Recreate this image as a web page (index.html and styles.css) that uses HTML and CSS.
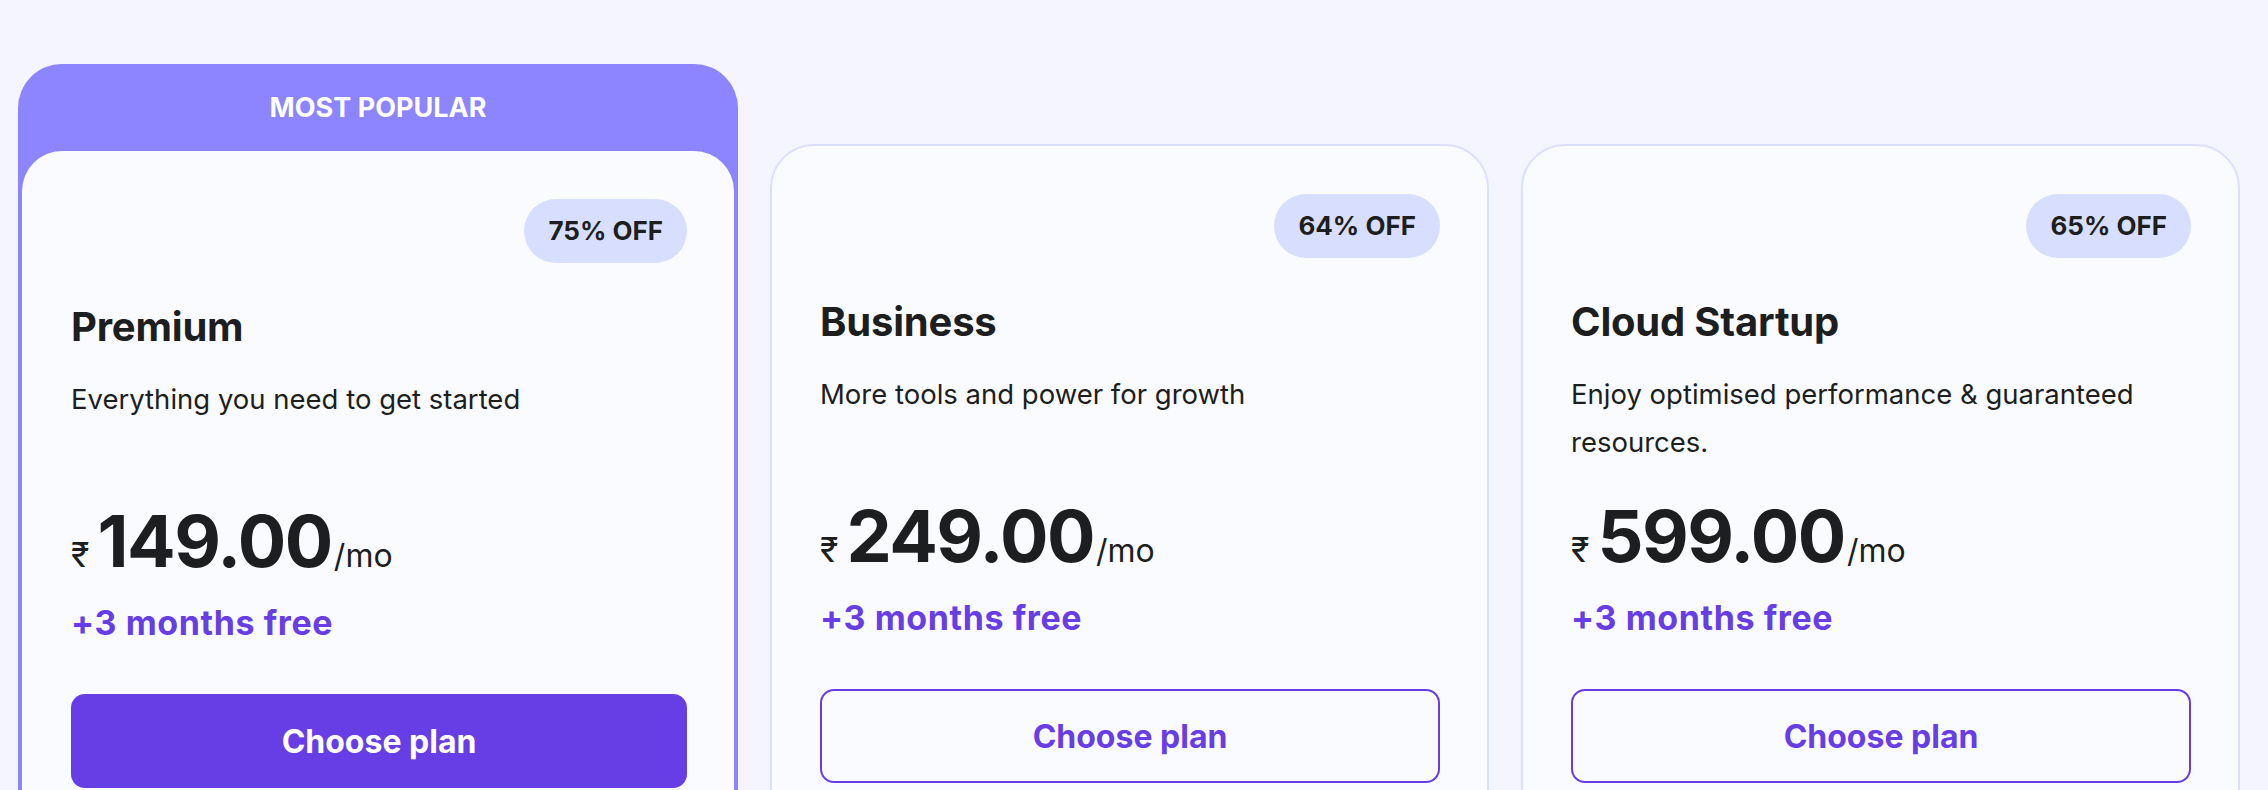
FILE: index.html
```html
<!DOCTYPE html>
<html lang="en">
<head>
<meta charset="utf-8">
<title>Plans</title>
<link rel="stylesheet" href="styles.css">
</head>
<body>
<main class="plans">
  <section class="popular">
    <div class="popular-label">MOST POPULAR</div>
    <div class="card card-inner">
      <div class="badge-row"><span class="badge">75% OFF</span></div>
      <h2 class="title">Premium</h2>
      <p class="desc">Everything you need to get started</p>
      <div class="price"><span class="cur">₹</span><span class="amount">149.00</span><span class="per">/mo</span></div>
      <div class="bonus">+3 months free</div>
      <button class="btn btn-solid">Choose plan</button>
    </div>
  </section>
  <section class="card card-plain">
    <div class="badge-row"><span class="badge">64% OFF</span></div>
    <h2 class="title">Business</h2>
    <p class="desc">More tools and power for growth</p>
    <div class="price"><span class="cur">₹</span><span class="amount">249.00</span><span class="per">/mo</span></div>
    <div class="bonus">+3 months free</div>
    <button class="btn btn-outline">Choose plan</button>
  </section>
  <section class="card card-plain">
    <div class="badge-row"><span class="badge">65% OFF</span></div>
    <h2 class="title">Cloud Startup</h2>
    <p class="desc">Enjoy optimised performance &amp; guaranteed resources.</p>
    <div class="price"><span class="cur">₹</span><span class="amount">599.00</span><span class="per">/mo</span></div>
    <div class="bonus">+3 months free</div>
    <button class="btn btn-outline">Choose plan</button>
  </section>
</main>
</body>
</html>
```
FILE: styles.css
```css
html, body {
  margin: 0;
  height: 790px;
  overflow: hidden;
}
body {
  background: #f4f5ff;
  font-family: Inter, "DejaVu Sans", sans-serif;
  color: #1d1e20;
}
.plans {
  display: flex;
  align-items: flex-start;
  gap: 32px;
  padding: 64px 0 0 18px;
}
.popular {
  width: 720px;
  flex: none;
  background: #8c85ff;
  border-radius: 44px;
  padding: 0 4px 4px;
  box-sizing: border-box;
}
.popular-label {
  height: 87px;
  line-height: 87px;
  text-align: center;
  color: #fff;
  font-weight: 700;
  font-size: 27px;
}
.card {
  background: #fafbff;
  border-radius: 42px;
  box-sizing: border-box;
  display: flex;
  flex-direction: column;
}
.card-inner {
  padding: 48px 47px 48px 49px;
  border-radius: 40px;
}
.card-plain {
  width: 719px;
  flex: none;
  margin-top: 80px;
  border: 2px solid #dcdffd;
  border-radius: 44px;
  padding: 48px 47px 48px 48px;
}
.badge-row {
  display: flex;
  justify-content: flex-end;
}
.badge {
  height: 64px;
  line-height: 64px;
  padding: 0 24px;
  border-radius: 32px;
  background: #d8dffe;
  font-weight: 700;
  font-size: 26px;
  color: #1d1e20;
}
.title {
  margin: 40px 0 0;
  font-size: 40px;
  line-height: 48px;
  font-weight: 700;
  letter-spacing: -0.2px;
}
.desc {
  margin: 24px 0 0;
  min-height: 96px;
  font-size: 27.5px;
  line-height: 48px;
  font-weight: 400;
}
.price {
  margin-top: 30px;
  display: flex;
  align-items: baseline;
  height: 80px;
}
.cur {
  font-size: 34px;
  line-height: 1;
  margin-right: 8px;
}
.amount {
  font-size: 72px;
  line-height: 80px;
  font-weight: 700;
  letter-spacing: -1.5px;
}
.per {
  font-size: 32px;
  line-height: 1;
  margin-left: 2px;
}
.bonus {
  margin-top: 22px;
  font-size: 34px;
  line-height: 40px;
  font-weight: 700;
  letter-spacing: 0.6px;
  color: #673de6;
}
.btn {
  margin-top: 51px;
  height: 94px;
  border-radius: 14px;
  font-family: inherit;
  font-size: 32px;
  font-weight: 700;
  cursor: pointer;
  box-sizing: border-box;
}
.btn-solid {
  background: #673de6;
  color: #fff;
  border: none;
}
.btn-outline {
  background: transparent;
  color: #673de6;
  border: 2px solid #673de6;
}
```
